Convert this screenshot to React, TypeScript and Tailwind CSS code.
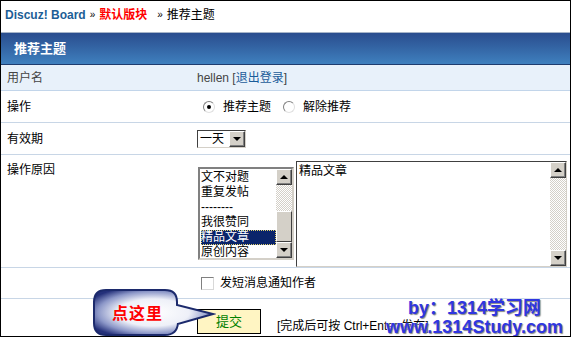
import React from "react";

const FONT = "font-['Liberation_Sans','Noto_Sans_CJK_SC',sans-serif]";

function ScrollBtn({ dir }: { dir: "up" | "down" }) {
  return (
    <div className="w-[16px] h-[16px] bg-[#d4d0c8] border-t border-l border-t-white border-l-white border-r border-b border-r-[#404040] border-b-[#404040] flex items-center justify-center shadow-[inset_-1px_-1px_0_#808080]">
      <div
        className={
          dir === "up"
            ? "w-0 h-0 border-l-[4px] border-r-[4px] border-b-[4px] border-l-transparent border-r-transparent border-b-black"
            : "w-0 h-0 border-l-[4px] border-r-[4px] border-t-[4px] border-l-transparent border-r-transparent border-t-black"
        }
      />
    </div>
  );
}

function Radio({ checked }: { checked?: boolean }) {
  return (
    <span className="w-[12px] h-[12px] rounded-full bg-white border border-t-[#808080] border-l-[#808080] border-r-[#e0e0e0] border-b-[#e0e0e0] flex items-center justify-center">
      {checked && <span className="w-[4px] h-[4px] rounded-full bg-black" />}
    </span>
  );
}

const track =
  "bg-[repeating-conic-gradient(#ffffff_0_25%,#d4d0c8_0_50%)] bg-[length:2px_2px]";

export default function App() {
  const reasons = ["文不对题", "重复发帖", "--------", "我很赞同", "精品文章", "原创内容"];
  return (
    <div className={`w-[571px] h-[337px] border border-black relative overflow-hidden bg-white text-[12px] ${FONT}`}>
      {/* breadcrumb */}
      <div className="h-[32px] pl-[4px] pt-[5px] flex items-start gap-[4px] border-b border-[#a7b5c9]">
        <span className="font-bold text-[#1c5e96]">Discuz! Board</span>
        <span className="text-[10px] mt-[1px]">»</span>
        <span className="font-bold text-[#ff0000] mr-[6px]">默认版块</span>
        <span className="text-[10px] mt-[1px]">»</span>
        <span className="text-black">推荐主题</span>
      </div>

      {/* header */}
      <div className="h-[32px] pl-[13px] flex items-center font-bold text-white text-[13px] bg-gradient-to-b from-[#2a4d8e] to-[#3f80be] border-b border-[#1e3c6e]">
        推荐主题
      </div>

      {/* 用户名 */}
      <div className="h-[26px] flex items-center bg-[#e8f1fa] border-b border-[#c2d5ea] text-[#444]">
        <div className="w-[196px] pl-[6px]">用户名</div>
        <div>
          hellen [<span className="text-[#1a5c99]">退出登录</span>]
        </div>
      </div>

      {/* 操作 */}
      <div className="h-[32px] flex items-center border-b border-[#c8d6e6]">
        <div className="w-[196px] pl-[6px]">操作</div>
        <div className="flex items-center">
          <span className="ml-[6px]"><Radio checked /></span>
          <span className="ml-[8px]">推荐主题</span>
          <span className="ml-[12px]"><Radio /></span>
          <span className="ml-[8px]">解除推荐</span>
        </div>
      </div>

      {/* 有效期 */}
      <div className="h-[32px] flex items-center border-b border-[#c8d6e6]">
        <div className="w-[196px] pl-[6px]">有效期</div>
        <div className="w-[49px] h-[18px] flex items-stretch bg-white border border-t-[#404040] border-l-[#404040] border-r-[#d4d0c8] border-b-[#d4d0c8]">
          <span className="flex-1 leading-[16px] pl-[2px]">一天</span>
          <ScrollBtn dir="down" />
        </div>
      </div>

      {/* 操作原因 */}
      <div className="h-[113px] flex items-start border-b border-[#c8d6e6]">
        <div className="w-[196px] pl-[6px] pt-[6px]">操作原因</div>
        <div className="flex items-start pt-[6px]">
          <div className="ml-[1px] mt-[6px] w-[96px] h-[93px] flex border-2 border-t-[#808080] border-l-[#808080] border-r-[#d4d0c8] border-b-[#d4d0c8] bg-white">
            <div className="flex-1 pt-[1px] pl-[1px]">
              {reasons.map((r) => (
                <div
                  key={r}
                  className={
                    r === "精品文章"
                      ? "h-[15px] leading-[15px] bg-[#0a246a] text-white outline-1 outline-dotted outline-[#e0d070] -outline-offset-1"
                      : "h-[15px] leading-[15px]"
                  }
                >
                  {r}
                </div>
              ))}
            </div>
            <div className="w-[16px] flex flex-col">
              <ScrollBtn dir="up" />
              <div className={`h-[26px] ${track}`} />
              <div className="h-[31px] bg-[#d4d0c8] border-t border-l border-t-white border-l-white border-r border-b border-r-[#404040] border-b-[#404040]" />
              <div className={`flex-1 ${track}`} />
              <ScrollBtn dir="down" />
            </div>
          </div>
          <div className="ml-[2px] w-[271px] h-[106px] flex border border-t-[#404040] border-l-[#404040] border-r-[#d4d0c8] border-b-[#d4d0c8] bg-white">
            <div className="flex-1 pl-[2px] pt-[2px] leading-[15px]">精品文章</div>
            <div className="w-[16px] flex flex-col">
              <ScrollBtn dir="up" />
              <div className={`flex-1 ${track}`} />
              <ScrollBtn dir="down" />
            </div>
          </div>
        </div>
      </div>

      {/* 通知 */}
      <div className="h-[31px] flex items-center border-b border-[#c8d6e6]">
        <div className="w-[196px]" />
        <span className="ml-[4px] w-[13px] h-[13px] bg-white border border-t-[#808080] border-l-[#808080] border-r-[#d8d8d8] border-b-[#d8d8d8]" />
        <span className="ml-[6px]">发短消息通知作者</span>
      </div>

      {/* 提交 */}
      <div className="h-[36px] flex items-start pt-[10px]">
        <div className="w-[196px]" />
        <button className="w-[64px] h-[25px] bg-[#fff5c3] border border-black text-[#008000] text-[13px]">
          提交
        </button>
        <span className="ml-[16px] mt-[8px]">[完成后可按 Ctrl+Enter 发布]</span>
      </div>

      {/* callout */}
      <div className="absolute left-[91px] top-[287px] w-[124px] h-[50px]">
        <svg width="124" height="50" viewBox="0 0 124 50" className="absolute inset-0">
          <defs>
            <radialGradient id="bub" cx="50%" cy="50%" r="60%">
              <stop offset="0%" stopColor="#ffffff" />
              <stop offset="50%" stopColor="#eef0f8" />
              <stop offset="78%" stopColor="#8c97c8" />
              <stop offset="100%" stopColor="#24307a" />
            </radialGradient>
          </defs>
          <path
            d="M14 2 H73 Q85 2 85 14 V17 L121 26 L86 36 V35 Q85 47 73 47 H14 Q2 47 2 35 V14 Q2 2 14 2 Z"
            fill="url(#bub)"
            stroke="#1c2a6c"
            strokeWidth="2"
          />
        </svg>
        <span className="absolute left-[20px] top-[14px] text-[16px] font-bold text-[#ff0000] tracking-[1px]">
          点这里
        </span>
      </div>

      {/* watermark */}
      <div className="absolute left-[385px] top-[298px] font-bold text-[#2f36e0] text-[18px] leading-[19px] whitespace-nowrap [text-shadow:1px_1px_1px_#888,0_0_2px_#fff]">
        <div className="pl-[22px]">by：1314学习网</div>
        <div>www.1314Study.com</div>
      </div>
    </div>
  );
}
